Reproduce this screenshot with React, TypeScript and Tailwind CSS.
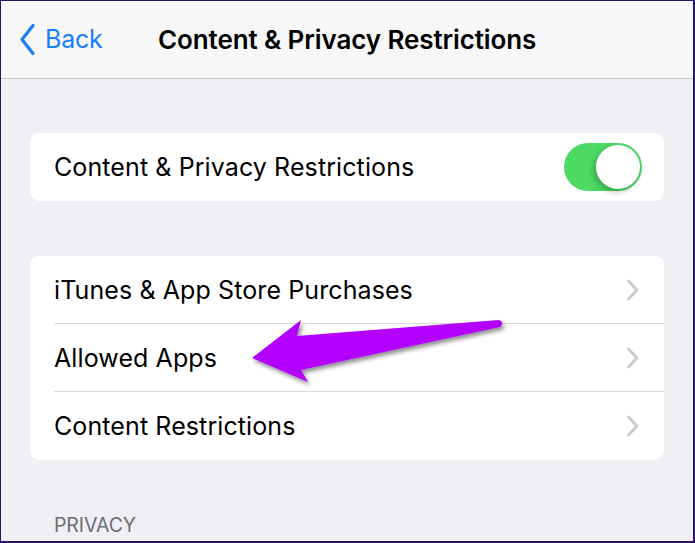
import React from "react";

const font = { fontFamily: "Inter, 'Noto Sans', 'Liberation Sans', sans-serif" };

function Chevron() {
  return (
    <svg width="14" height="22" viewBox="0 0 14 22" className="shrink-0">
      <path d="M2.5 2 L11 11 L2.5 20" fill="none" stroke="#c7c7cc" strokeWidth="2.6" strokeLinecap="round" strokeLinejoin="round" />
    </svg>
  );
}

function Row({ label, last }: { label: string; last?: boolean }) {
  return (
    <div className="flex h-[68px] items-stretch pl-[24px]">
      <div className={`flex flex-1 items-center justify-between pr-[24px] ${last ? "" : "border-b border-[#d9d9de]"}`}>
        <span className="pt-[2px] text-[25px] text-black tracking-[0.1px]">{label}</span>
        <Chevron />
      </div>
    </div>
  );
}

export default function App() {
  return (
    <div
      className="relative box-border h-[543px] w-[695px] overflow-hidden border-l border-t border-r-2 border-b-2 border-[#2c1373] bg-[#efeff4]"
      style={font}
    >
      <div className="flex h-[78px] items-center border-b border-[#c8c7cc] bg-[#f7f7f8]">
        <div className="flex w-[157px] items-center pl-[18px]">
          <svg width="17" height="33" viewBox="0 0 17 33">
            <path d="M14 2.5 L3 16.5 L14 30.5" fill="none" stroke="#157efb" strokeWidth="3.2" strokeLinecap="round" strokeLinejoin="round" />
          </svg>
          <span className="ml-[9px] text-[25px] text-[#157efb] tracking-[-0.2px]">Back</span>
        </div>
        <span className="text-[26px] font-semibold text-black tracking-[-0.1px]">Content &amp; Privacy Restrictions</span>
      </div>

      <div className="px-[29px] pt-[54px]">
        <div className="flex h-[68px] items-center justify-between rounded-[9px] bg-white pl-[24px] pr-[22px]">
          <span className="pt-[2px] text-[25px] text-black tracking-[0.1px]">Content &amp; Privacy Restrictions</span>
          <div className="flex h-[48px] w-[78px] items-center justify-end rounded-full bg-[#4cd964] px-[2px]">
            <div className="h-[44px] w-[44px] rounded-full bg-white shadow-[-2px_3px_6px_rgba(0,0,0,0.25)]" />
          </div>
        </div>

        <div className="mt-[55px] overflow-hidden rounded-[9px] bg-white">
          <Row label="iTunes & App Store Purchases" />
          <Row label="Allowed Apps" />
          <Row label="Content Restrictions" last />
        </div>

        <div className="mt-[51px] pl-[24px] text-[19.5px] text-[#6d6d72] tracking-[-0.1px]">PRIVACY</div>
      </div>

      <svg className="pointer-events-none absolute left-[-1px] top-[-1px]" width="695" height="543" viewBox="0 0 695 543">
        <defs>
          <filter id="sh" x="-10%" y="-30%" width="130%" height="160%">
            <feDropShadow dx="2" dy="3" stdDeviation="2" floodColor="#000" floodOpacity="0.45" />
          </filter>
        </defs>
        <path
          d="M252 358 L301 320 L297 336 L499 320 Q505 322 500 327 L301 370 L308 382 Z"
          fill="#b400ff"
          filter="url(#sh)"
        />
      </svg>
    </div>
  );
}
